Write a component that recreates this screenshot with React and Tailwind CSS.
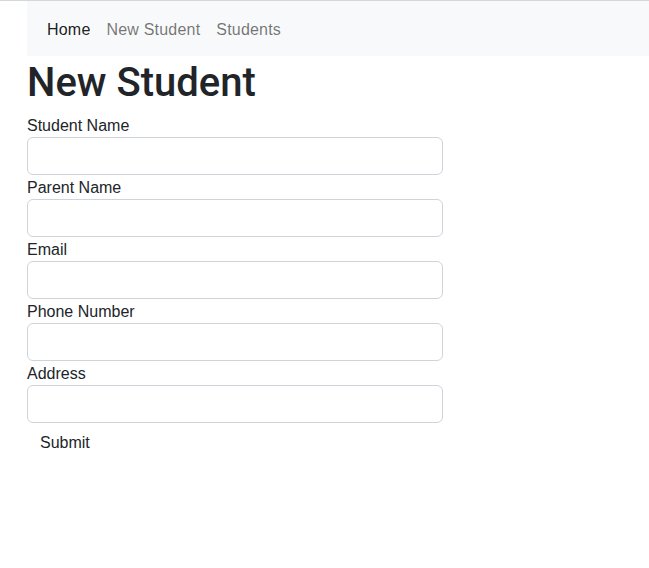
import React from 'react'

const fields = ['Student Name', 'Parent Name', 'Email', 'Phone Number', 'Address']

export default function App() {
  return (
    <div className="min-h-[568px] bg-white border-t border-[#d3d8dc] text-[#212529]" style={{ fontFamily: '"Liberation Sans", Arial, sans-serif' }}>
      <div className="pl-[27px]">
        {/* Navbar */}
        <nav className="bg-[#f8f9fa] h-[55px] flex items-center pl-3 pt-[2px] tracking-[0.2px]">
          <a href="#" className="px-2 py-2 text-base leading-6 text-black/90">Home</a>
          <a href="#" className="px-2 py-2 text-base leading-6 text-black/55">New Student</a>
          <a href="#" className="px-2 py-2 text-base leading-6 text-black/55">Students</a>
        </nav>

        <h1 className="text-[40px] leading-[48px] font-medium mt-[3px] mb-[6px]" style={{ fontFamily: 'Roboto, "Liberation Sans", sans-serif' }}>New Student</h1>

        <form className="w-[416px]" onSubmit={e => e.preventDefault()}>
          {fields.map(label => (
            <div key={label}>
              <label className="block text-base leading-[23px] pt-[1px]">{label}</label>
              <input
                type="text"
                className="block w-full h-[38px] px-3 rounded-[6px] border border-[#ced4da] bg-white text-base"
              />
            </div>
          ))}
          <button type="submit" className="border border-transparent px-3 pt-[7px] pb-[5px] text-base leading-6 text-[#212529]">
            Submit
          </button>
        </form>
      </div>
    </div>
  )
}
